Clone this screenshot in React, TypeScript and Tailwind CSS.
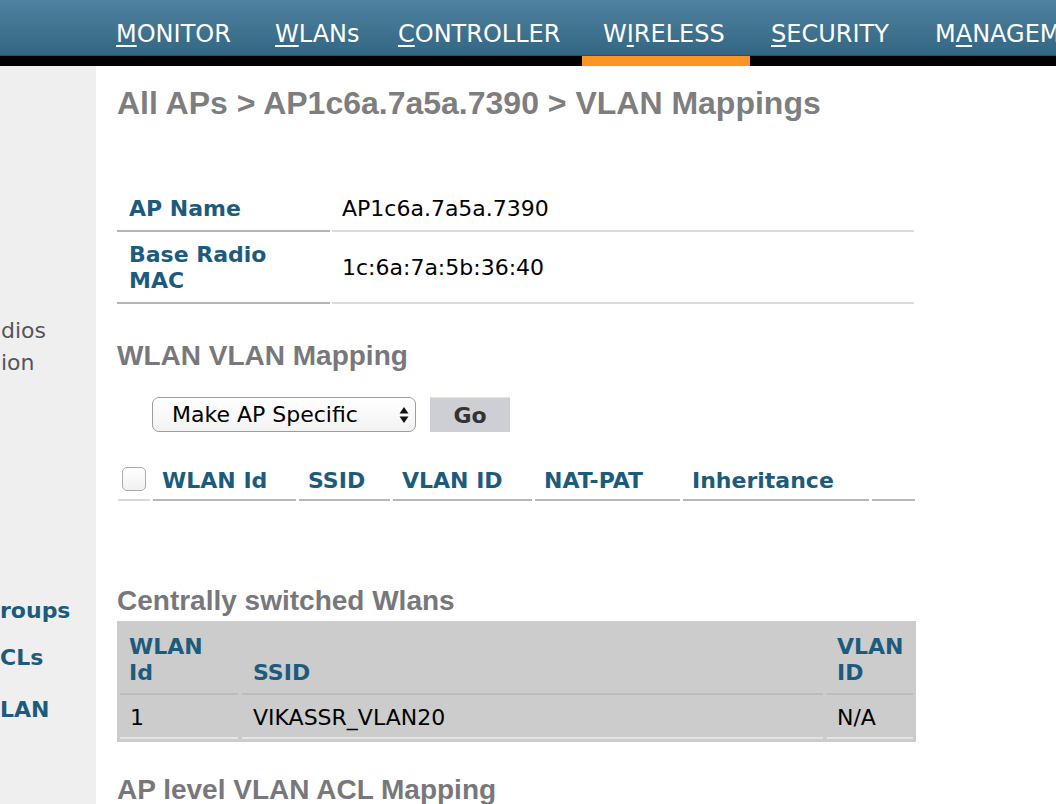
import React from "react";

const navItems = [
  { pre: "", key: "M", post: "ONITOR", w: "w-[159px]" },
  { pre: "", key: "W", post: "LANs", w: "w-[123px]" },
  { pre: "", key: "C", post: "ONTROLLER", w: "w-[205px]" },
  { pre: "W", key: "I", post: "RELESS", w: "w-[168px]", active: true },
  { pre: "", key: "S", post: "ECURITY", w: "w-[164px]" },
  { pre: "M", key: "A", post: "NAGEMENT", w: "w-[200px]" },
];

const body = "font-['DejaVu_Sans',Verdana,sans-serif]";
const head = "font-['Liberation_Sans',Arial,sans-serif] font-bold text-[28px] leading-[32px]";

function SelectArrows() {
  return (
    <svg width="10" height="20" viewBox="0 0 10 20" className="ml-auto">
      <path d="M5 2 L9.5 8.5 L0.5 8.5 Z" fill="#111" />
      <path d="M5 18 L9.5 11.5 L0.5 11.5 Z" fill="#111" />
    </svg>
  );
}

export default function App() {
  return (
    <div className={`w-[1056px] h-[804px] overflow-hidden bg-white ${body}`}>
      {/* top nav */}
      <div className="h-[66px] flex pl-[95px] bg-[linear-gradient(to_bottom,#4d82a0_0px,#336682_55px,#25526b_55px,#25526b_56px,#000_56px)] whitespace-nowrap">
        {navItems.map((n, i) => (
          <div key={i} className={`flex flex-col h-[66px] shrink-0 ${n.w}`}>
            <div className="pt-[20px] pl-[21px] h-[56px] text-[24px] leading-[28px] text-white">
              {n.pre}
              <span className="underline underline-offset-[3px] decoration-[2px]">{n.key}</span>
              {n.post}
            </div>
            <div className={`h-[10px] ${n.active ? "bg-[#fd9426]" : ""}`} />
          </div>
        ))}
      </div>

      <div className="flex h-[738px]">
        {/* sidebar (clipped) */}
        <div className="w-[96px] shrink-0 bg-[#efefef] flex flex-col whitespace-nowrap text-[22px] leading-[26px]">
          <div className="mt-[252px] pl-[1px] text-[#555]">dios</div>
          <div className="mt-[6px] pl-[1px] text-[#555]">ion</div>
          <div className="mt-[222px] font-bold text-[#1d5b7d]">roups</div>
          <div className="mt-[21px] font-bold text-[#1d5b7d]">CLs</div>
          <div className="mt-[26px] font-bold text-[#1d5b7d]">LAN</div>
        </div>

        {/* main */}
        <div className="flex-1 pl-[21px] flex flex-col">
          <div className="font-['Liberation_Sans',Arial,sans-serif] font-bold text-[32px] leading-[36px] mt-[19px] text-[#7e7e7e] whitespace-nowrap">
            All APs &gt; AP1c6a.7a5a.7390 &gt; VLAN Mappings
          </div>

          {/* AP info */}
          <div className="mt-[67px] grid grid-cols-[213px_582px] gap-[2px] text-[22px] leading-[26px]">
            <div className="py-[8px] pl-[12px] border-b-2 border-[#b4b4b4] font-bold text-[#1d5b7d]">AP Name</div>
            <div className="py-[8px] pl-[10px] border-b-2 border-[#dcdcdc] text-black">AP1c6a.7a5a.7390</div>
            <div className="py-[8px] pl-[12px] border-b-2 border-[#b4b4b4] font-bold text-[#1d5b7d]">
              Base Radio
              <br />
              MAC
            </div>
            <div className="py-[8px] pl-[10px] border-b-2 border-[#dcdcdc] text-black flex items-center">
              1c:6a:7a:5b:36:40
            </div>
          </div>

          <div className={`${head} mt-[36px] text-[#78787c]`}>WLAN VLAN Mapping</div>

          <div className="mt-[25px] ml-[35px] flex items-center gap-[14px]">
            <div className="w-[264px] h-[35px] rounded-[7px] border border-[#9d9d9d] bg-[linear-gradient(to_bottom,#ffffff,#f3f3f3)] flex items-center pl-[19px] pr-[6px] text-[22px] text-black">
              Make AP Specific
              <SelectArrows />
            </div>
            <div className="w-[80px] h-[35px] bg-[#cdcfd5] border-t border-[#e3e4e7] flex items-center justify-center text-[22px] font-bold text-[#333]">
              Go
            </div>
          </div>

          {/* mapping header row */}
          <div className="mt-[28px] ml-[1px] grid grid-cols-[32px_143px_91px_139px_145px_186px_43px] gap-x-[3px] text-[22px] leading-[26px] font-bold text-[#1d5b7d]">
            <div className="h-[41px] border-b-2 border-[#d9d9d9] flex items-center pl-[4px] pb-[1px]">
              <div className="w-[24px] h-[24px] rounded-[5px] border border-[#ababab] bg-[linear-gradient(to_bottom,#ffffff,#f1f1f1)]" />
            </div>
            <div className="h-[41px] border-b-2 border-[#b8b8b8] pl-[9px] pt-[8px]">WLAN Id</div>
            <div className="h-[41px] border-b-2 border-[#b8b8b8] pl-[9px] pt-[8px]">SSID</div>
            <div className="h-[41px] border-b-2 border-[#b8b8b8] pl-[9px] pt-[8px]">VLAN ID</div>
            <div className="h-[41px] border-b-2 border-[#b8b8b8] pl-[9px] pt-[8px]">NAT-PAT</div>
            <div className="h-[41px] border-b-2 border-[#b8b8b8] pl-[9px] pt-[8px]">Inheritance</div>
            <div className="h-[41px] border-b-2 border-[#b8b8b8]" />
          </div>

          <div className={`${head} mt-[84px] text-[#78787c]`}>Centrally switched Wlans</div>

          {/* central table */}
          <div className="mt-[4px] w-[799px] bg-[#cccccc] px-[3px] pt-[3px] pb-[3px] grid grid-cols-[118px_581px_86px] gap-x-[4px] text-[22px] leading-[26px]">
            <div className="pl-[9px] pt-[10px] pb-[7px] border-b-2 border-[#bcbcbc] font-bold text-[#1d5b7d] flex items-end">
              WLAN
              <br />
              Id
            </div>
            <div className="pl-[11px] pt-[10px] pb-[7px] border-b-2 border-[#bcbcbc] font-bold text-[#1d5b7d] flex items-end">SSID</div>
            <div className="pl-[10px] pt-[10px] pb-[7px] border-b-2 border-[#bcbcbc] font-bold text-[#1d5b7d] flex items-end">
              VLAN
              <br />
              ID
            </div>
            <div className="pl-[10px] pt-[10px] pb-[6px] border-b-2 border-[#e4e4e4] text-black">1</div>
            <div className="pl-[11px] pt-[10px] pb-[6px] border-b-2 border-[#e4e4e4] text-black">VIKASSR_VLAN20</div>
            <div className="pl-[10px] pt-[10px] pb-[6px] border-b-2 border-[#e4e4e4] text-black">N/A</div>
          </div>

          <div className={`${head} mt-[32px] text-[#78787c] whitespace-nowrap`}>AP level VLAN ACL Mapping</div>
        </div>
      </div>
    </div>
  );
}
